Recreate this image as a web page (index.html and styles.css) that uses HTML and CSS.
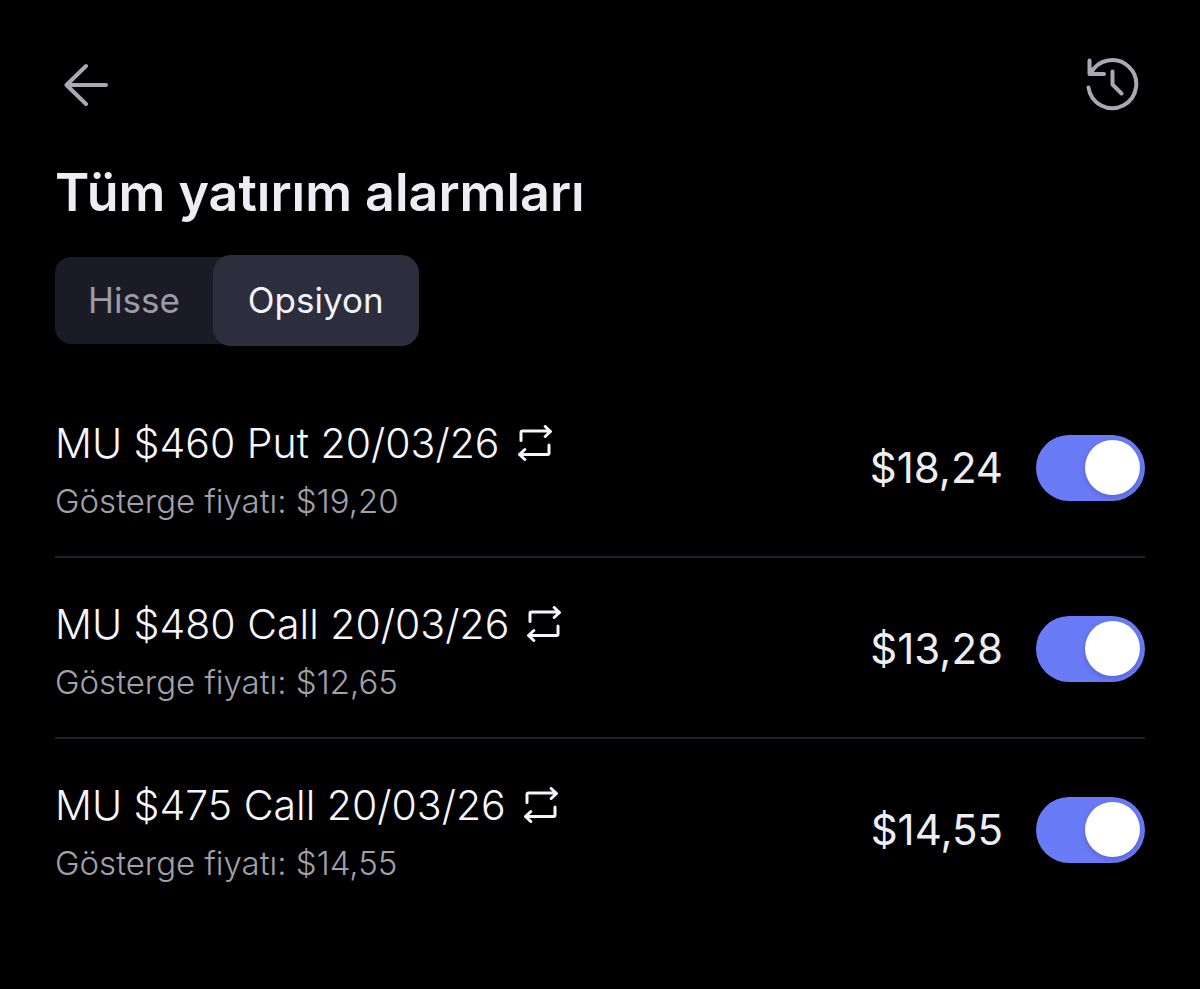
FILE: index.html
```html
<!DOCTYPE html>
<html lang="tr">
<head>
<meta charset="utf-8">
<meta name="viewport" content="width=device-width, initial-scale=1">
<title>Tüm yatırım alarmları</title>
<link rel="stylesheet" href="styles.css">
</head>
<body>
<svg class="sprite" aria-hidden="true">
  <symbol id="repeat" viewBox="0 0 36 36">
    <path d="M3 15.500V7.500Q3 6 4.500 6H32M27.200 1.500 32.500 6.500 27.200 11.500M31 20V28Q31 29.500 29.500 29.500H2M6.800 24.500 1.500 29.500 6.800 34.500"/>
  </symbol>
</svg>
<main class="screen">
  <header class="topbar">
    <button class="icon-button" type="button" aria-label="Geri">
      <svg class="icon-back" viewBox="0 0 44 44"><path d="M42 22H2.500M22 3 2.500 22 22 41"/></svg>
    </button>
    <button class="icon-button" type="button" aria-label="Geçmiş">
      <svg class="icon-history" viewBox="0 0 54 56"><path d="M3.500 3.500V17H18M4.500 17A24 24 0 1 1 2.500 30.500M26.500 14.500V27.500L35.500 36.500"/></svg>
    </button>
  </header>
  <h1 class="title">Tüm yatırım alarmları</h1>
  <div class="tabs" role="tablist">
    <button class="tab" type="button" role="tab" aria-selected="false">Hisse</button>
    <button class="tab tab-active" type="button" role="tab" aria-selected="true">Opsiyon</button>
  </div>
  <ul class="alarms">
    <li class="alarm">
      <div class="info">
        <label class="name" for="alarm-1">MU $460 Put 20/03/26 <svg class="repeat"><use href="#repeat"/></svg></label>
        <p class="detail">Gösterge fiyatı: $19,20</p>
      </div>
      <span class="price">$18,24</span>
      <input class="switch" id="alarm-1" type="checkbox" role="switch" checked>
    </li>
    <li class="alarm">
      <div class="info">
        <label class="name" for="alarm-2">MU $480 Call 20/03/26 <svg class="repeat"><use href="#repeat"/></svg></label>
        <p class="detail">Gösterge fiyatı: $12,65</p>
      </div>
      <span class="price">$13,28</span>
      <input class="switch" id="alarm-2" type="checkbox" role="switch" checked>
    </li>
    <li class="alarm">
      <div class="info">
        <label class="name" for="alarm-3">MU $475 Call 20/03/26 <svg class="repeat"><use href="#repeat"/></svg></label>
        <p class="detail">Gösterge fiyatı: $14,55</p>
      </div>
      <span class="price">$14,55</span>
      <input class="switch" id="alarm-3" type="checkbox" role="switch" checked>
    </li>
  </ul>
</main>
</body>
</html>
```
FILE: styles.css
```css
* { box-sizing: border-box; }
body {
  margin: 0;
  background: #000;
  color: #ededf4;
  font-family: Inter, "Liberation Sans", sans-serif;
}
button { border: 0; font: inherit; cursor: pointer; }
svg {
  fill: none;
  stroke: currentColor;
  stroke-width: 4;
  stroke-linecap: round;
  stroke-linejoin: round;
}
.sprite { display: none; }
.screen { padding: 57px 55px; }
.topbar {
  display: flex;
  justify-content: space-between;
  align-items: center;
  padding: 0 5px 0 9px;
}
.icon-button {
  display: flex;
  padding: 0;
  background: none;
  color: #a9a8b4;
}
.icon-back { width: 44px; height: 44px; }
.icon-history { width: 54px; height: 56px; }
.title {
  margin: 48px 0 32px;
  font-size: 52px;
  line-height: 64px;
  font-weight: 600;
}
.tabs {
  display: flex;
  width: fit-content;
  height: 87px;
  border-radius: 16px;
  background: #1b1b25;
}
.tab {
  padding: 0 33px 2px;
  border-radius: 18px;
  background: none;
  color: #9c9ba8;
  font-size: 35px;
}
.tab-active {
  margin: -2px 0;
  padding: 0 35px 2px;
  background: #2c2d3d;
  color: #f3f3fb;
}
.alarms { margin: 33px 0 0; padding: 0; list-style: none; }
.alarm {
  display: flex;
  align-items: center;
  padding: 34px 0 31px;
}
.alarm + .alarm { border-top: 2px solid #21212c; }
.info { flex: 1; padding-top: 4px; }
.name {
  display: flex;
  align-items: center;
  gap: 18px;
  color: #f6f6fb;
  font-size: 41px;
  line-height: 56px;
  font-weight: 300;
}
.repeat { width: 36px; height: 36px; stroke-width: 3; }
.detail {
  margin: 6px 0 0;
  color: #a1a0ac;
  font-size: 33px;
  line-height: 48px;
  font-weight: 300;
}
.price { font-size: 42px; line-height: 56px; }
.switch {
  appearance: none;
  display: flex;
  justify-content: flex-end;
  width: 109px;
  height: 66px;
  margin: 0 0 0 33px;
  padding: 5px;
  border-radius: 33px;
  background: #6a7bf8;
  cursor: pointer;
}
.switch::before {
  content: "";
  width: 55px;
  height: 55px;
  border-radius: 50%;
  background: #fff;
  box-shadow: 0 2px 6px rgb(0 0 0 / 20%);
}
.switch:not(:checked) { justify-content: flex-start; background: #2c2d3d; }
```
